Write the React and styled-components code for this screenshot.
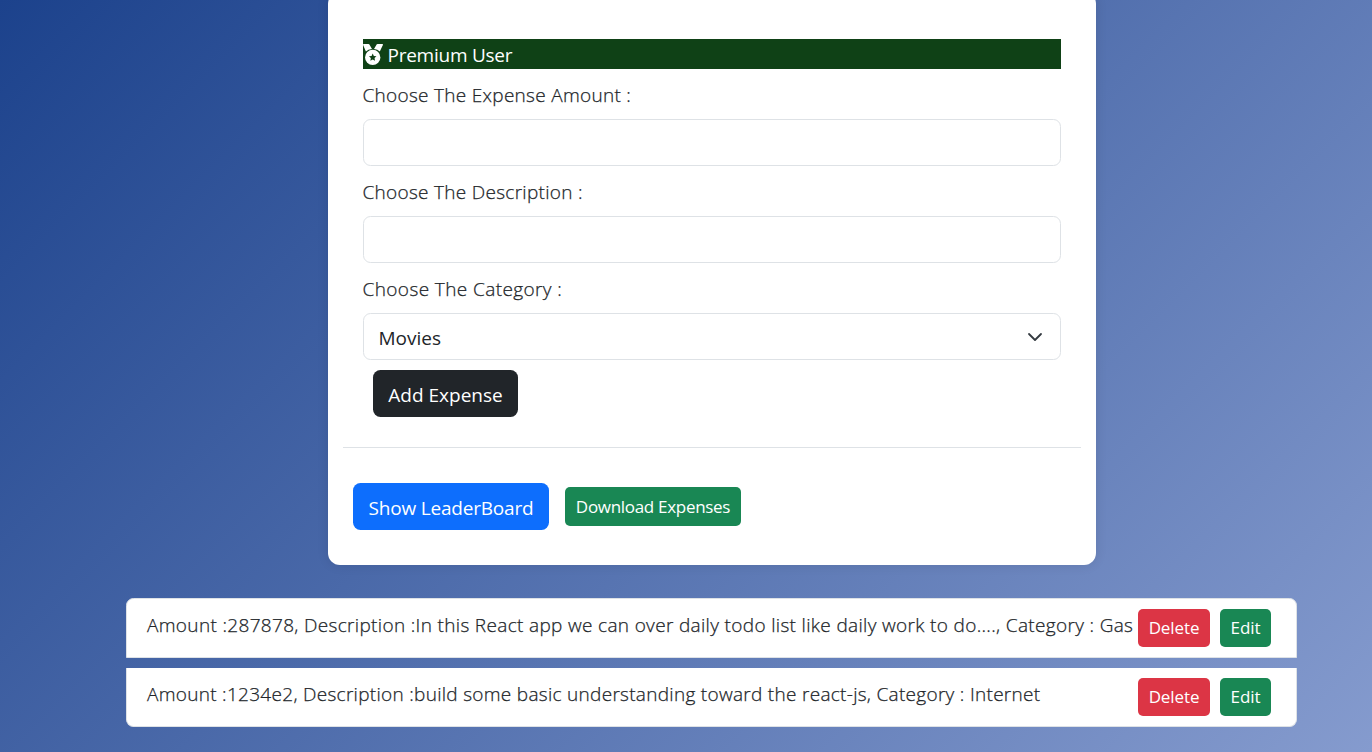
import React from 'react';
import styled, { createGlobalStyle } from 'styled-components';

const GlobalStyle = createGlobalStyle`
  *, *::before, *::after { box-sizing: border-box; }
  body {
    margin: 0;
    color: #212529;
    font-family: 'Segoe UI', 'Open Sans', 'Noto Sans', sans-serif;
    font-size: 19px;
    line-height: 30px;
  }
`;

const Page = styled.main`
  display: flex;
  flex-direction: column;
  align-items: center;
  height: 752px;
  overflow: hidden;
  padding-left: 51px;
  background: linear-gradient(135deg, #1c428c 0%, #859bce 100%);
`;

const Card = styled.section`
  flex: none;
  width: 768px;
  height: 573px;
  margin-top: -8px;
  padding: 47px 15px 0;
  border-radius: 12px;
  background: #fff;
  box-shadow: 0 0 12px rgba(0, 0, 0, 0.1);
`;

const Form = styled.form`
  display: flex;
  flex-direction: column;
  height: 409px;
  padding: 0 20px;
  border-bottom: 1px solid #dee2e6;
`;

const Banner = styled.div`
  display: flex;
  align-items: center;
  gap: 5px;
  height: 30px;
  margin-bottom: 10px;
  padding-top: 2px;
  background: #0f4116;
  color: #fff;
  letter-spacing: -0.25px;

  svg {
    flex: none;
    margin-top: -1px;
  }
`;

const Field = styled.div`
  display: flex;
  flex-direction: column;
  gap: 9px;
  margin-bottom: 10px;
`;

const Label = styled.label`
  padding-top: 1px;
  font-weight: 300;
  letter-spacing: ${(p) => p.$spacing || '0.29px'};
  -webkit-text-stroke: 0.25px currentColor;
`;

const Input = styled.input`
  height: 47px;
  padding: 0 15px;
  border: 1px solid #dee2e6;
  border-radius: 7.5px;
  background: #fff;
  font: inherit;
`;

const Select = styled.div`
  display: flex;
  align-items: center;
  justify-content: space-between;
  height: 47px;
  padding: 2px 17px 0 15px;
  border: 1px solid #dee2e6;
  border-radius: 7.5px;

  svg {
    margin-top: -2px;
  }
`;

const Button = styled.button`
  flex: none;
  width: ${(p) => p.$width}px;
  height: ${(p) => (p.$small ? p.$height || 38 : 47)}px;
  padding: ${(p) => (p.$small ? 0 : 3)}px 0 0 ${(p) => p.$shift ?? 1}px;
  border: 0;
  border-radius: ${(p) => (p.$small ? 5 : 7.5)}px;
  background: ${(p) => p.$color};
  color: #fff;
  font: inherit;
  font-size: ${(p) => (p.$small ? 17 : 19)}px;
  letter-spacing: ${(p) => p.$spacing || '0'};
  white-space: nowrap;
`;

const SubmitRow = styled.div`
  display: flex;
  padding-left: 10px;
`;

const Actions = styled.div`
  display: flex;
  align-items: center;
  gap: 16px;
  padding: 35px 10px 0;
`;

const List = styled.ul`
  display: flex;
  flex-direction: column;
  gap: 10px;
  flex: none;
  width: 1171px;
  margin: 33px 0 0;
  padding: 0;
  list-style: none;
`;

const Item = styled.li`
  display: flex;
  gap: 10px;
  height: ${(p) => (p.$first ? 60 : 59)}px;
  padding: 10px 25px 0 20px;
  border: 1px solid #dee2e6;
  border-top-width: ${(p) => (p.$first ? 1 : 0)}px;
  border-radius: ${(p) => (p.$first ? '7.5px 7.5px 0 0' : '0 0 7.5px 7.5px')};
  background: #fff;
`;

const ItemText = styled.span`
  flex: 1;
  width: 0;
  margin-top: 1px;
  font-weight: 300;
  letter-spacing: ${(p) => p.$spacing};
  -webkit-text-stroke: 0.25px currentColor;
  white-space: nowrap;
`;

const Chevron = () => (
  <svg width="16" height="16" viewBox="0 0 16 16" fill="none">
    <path d="m2 5 6 6 6-6" stroke="#343a40" strokeWidth="1.8" strokeLinecap="round" strokeLinejoin="round" />
  </svg>
);

const Medal = () => (
  <svg width="20" height="22" viewBox="0 0 20 22">
    <path d="M.6 0h4.9q.6 0 .9.5L9 4.9Q5 5.200 2.900 7.600L.1 1.100Q-.2 0 .6 0ZM19.400 0h-4.900q-.6 0-.9.5L11 4.900q3.600.3 5.800 2.700L19.900 1.100q.3-1.100-.5-1.100Z" fill="currentColor" />
    <circle cx="9.700" cy="13.400" r="7.700" fill="currentColor" />
    <path d="m9.700 9.500 1.150 2.400 2.600.35-1.900 1.850.45 2.600-2.300-1.250-2.300 1.250.45-2.600-1.900-1.850 2.600-.35Z" fill="#0f4116" />
  </svg>
);

const expenses = [
  {
    text: 'Amount :287878, Description :In this React app we can over daily todo list like daily work to do...., Category : Gas',
    spacing: '0.335px',
  },
  {
    text: 'Amount :1234e2, Description :build some basic understanding toward the react-js, Category : Internet',
    spacing: '0.295px',
  },
];

export default function App() {
  return (
    <Page>
      <GlobalStyle />
      <Card>
        <Form>
          <Banner><Medal />Premium User</Banner>
          <Field>
            <Label>Choose The Expense Amount :</Label>
            <Input />
          </Field>
          <Field>
            <Label>Choose The Description :</Label>
            <Input />
          </Field>
          <Field>
            <Label $spacing="0.4px">Choose The Category :</Label>
            <Select>Movies<Chevron /></Select>
          </Field>
          <SubmitRow>
            <Button type="button" $width={145} $color="#212529">Add Expense</Button>
          </SubmitRow>
        </Form>
        <Actions>
          <Button $width={196} $color="#0d6efd" $spacing="-0.2px">Show LeaderBoard</Button>
          <Button $small $height={39} $width={176} $color="#198754" $spacing="-0.3px">Download Expenses</Button>
        </Actions>
      </Card>
      <List>
        {expenses.map(({ text, spacing }, i) => (
          <Item key={text} $first={i === 0}>
            <ItemText $spacing={spacing}>{text}</ItemText>
            <Button $small $width={72} $color="#dc3545" $spacing="-0.1px" $shift={0}>Delete</Button>
            <Button $small $width={51} $color="#198754" $spacing="-0.1px" $shift={0}>Edit</Button>
          </Item>
        ))}
      </List>
    </Page>
  );
}
